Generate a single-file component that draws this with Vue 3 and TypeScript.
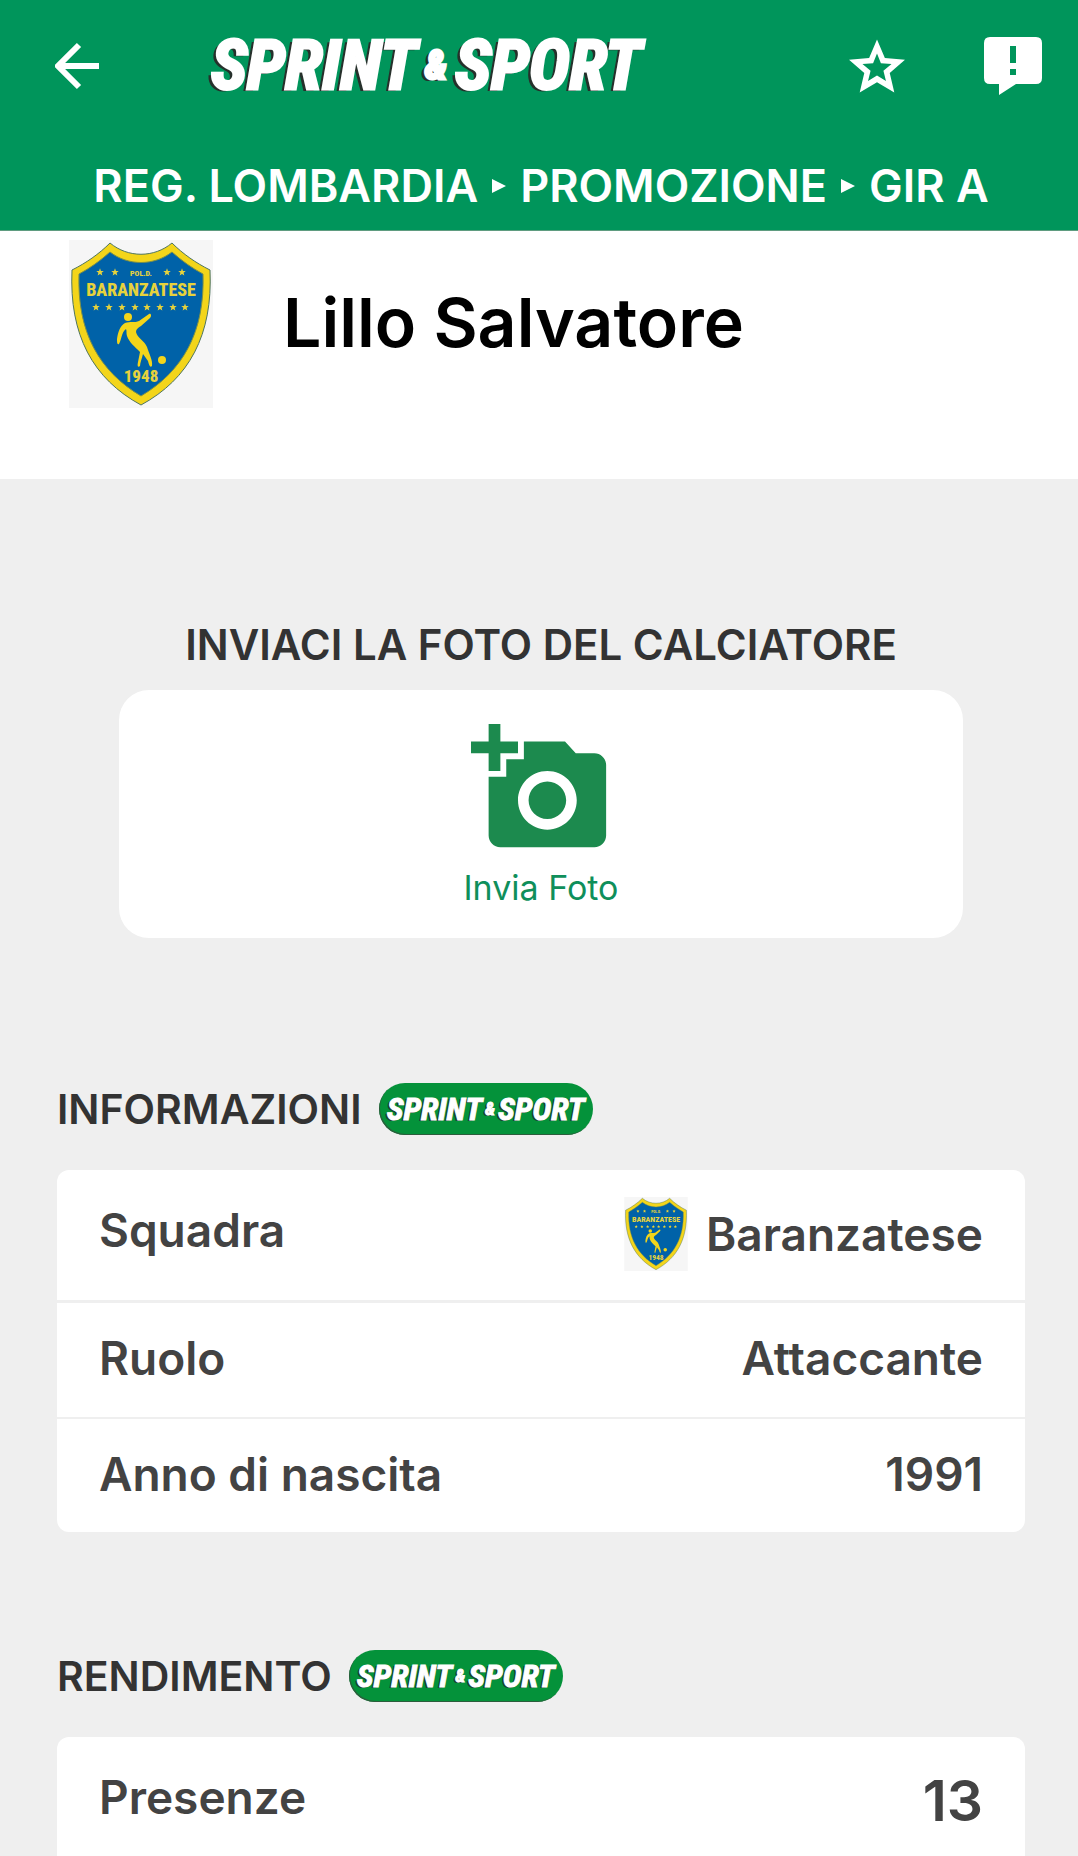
<script setup lang="ts">
interface InfoRow {
  label: string
  value: string
  crest?: boolean
  large?: boolean
}

interface InfoSection {
  title: string
  rows: InfoRow[]
}

const trail: string[] = ['REG. LOMBARDIA', 'PROMOZIONE', 'GIR A']

const sections: InfoSection[] = [
  {
    title: 'INFORMAZIONI',
    rows: [
      { label: 'Squadra', value: 'Baranzatese', crest: true },
      { label: 'Ruolo', value: 'Attaccante' },
      { label: 'Anno di nascita', value: '1991' },
    ],
  },
  {
    title: 'RENDIMENTO',
    rows: [{ label: 'Presenze', value: '13', large: true }],
  },
]

const upperStars: number[] = [31, 46, 98, 113]
const lowerStars: number[] = [27, 40, 53, 66, 78, 91, 104, 116]
</script>

<template>
  <div class="page">
    <header class="top">
      <div class="bar">
        <button class="icon-btn back" type="button" aria-label="Indietro">
          <svg viewBox="0 0 44 48" width="44" height="48">
            <path d="M44 24H5M24 3 3 24 24 45" fill="none" stroke="#fff" stroke-width="6" />
          </svg>
        </button>
        <div class="wordmark">SPRINT<span class="amp">&amp;</span>SPORT</div>
        <button class="icon-btn star" type="button" aria-label="Preferiti">
          <svg viewBox="2 2 20 19" width="56" height="54">
            <path fill="#fff" d="M22 9.24l-7.19-.62L12 2 9.19 8.63 2 9.24l5.46 4.73L5.82 21 12 17.27 18.18 21l-1.63-7.03L22 9.24zM12 14.9l-3.2 2 .9-3.7-2.9-2.4 3.8-.3L12 7l1.4 3.5 3.8.3-2.9 2.4.9 3.7L12 14.9z" />
          </svg>
        </button>
        <button class="icon-btn" type="button" aria-label="Segnala">
          <svg viewBox="0 0 58 58" width="58" height="58">
            <path fill="#fff" fill-rule="evenodd" d="M6 0H52Q58 0 58 6V41Q58 47 52 47H32L15 58V47H6Q0 47 0 41V6Q0 0 6 0ZM26 9V26H32V9ZM26 32V38H32V32Z" />
          </svg>
        </button>
      </div>
      <nav class="trail">
        <template v-for="(item, i) in trail" :key="item">
          <svg v-if="i > 0" class="sep" viewBox="0 0 14 14" width="14" height="14" aria-hidden="true">
            <path d="M0 0 14 7 0 14Z" fill="#fff" />
          </svg>
          <span>{{ item }}</span>
        </template>
      </nav>
    </header>

    <section class="player">
      <svg class="crest-large" viewBox="0 0 144 168">
        <symbol id="crest-star" viewBox="0 0 10 10">
          <path fill="#e6d23c" d="M5 0.4 6.2 3.6 9.7 3.8 7 6 7.9 9.4 5 7.5 2.1 9.4 3 6 0.3 3.8 3.8 3.6Z" />
        </symbol>
        <g id="crest">
          <rect width="144" height="168" fill="#f6f6f6" />
          <path
            d="M41 3C59 18 85 18 103 3C114 14 127 23 141 30C144 95 120 139 72 165C24 139 0 95 3 30C17 23 30 14 41 3Z"
            fill="#f3d51a" stroke="#4f7560" stroke-width="1"
          />
          <path
            d="M41 12C59 26 85 26 103 12C113 21 123 28 134 34C136 92 114 131 72 156C30 131 8 92 10 34C21 28 31 21 41 12Z"
            fill="#0062a8" stroke="#7b8f4a" stroke-width="1"
          />
          <use v-for="x in upperStars" :key="`u${x}`" href="#crest-star" :x="x - 4" y="28" width="8" height="8" />
          <use v-for="x in lowerStars" :key="`l${x}`" href="#crest-star" :x="x - 4" y="63" width="8" height="8" />
          <g fill="#e6d23c" font-family="'Roboto Condensed', Roboto, sans-serif" font-weight="800" text-anchor="middle">
            <text x="72" y="36" font-size="8">POL.D.</text>
            <text x="72" y="56" font-size="18">BARANZATESE</text>
            <text x="72" y="142" font-size="17">1948</text>
          </g>
          <g fill="#f3d51a">
            <circle cx="59" cy="77" r="4" />
            <circle cx="93" cy="120" r="4" />
            <path d="M56 83C61 81 66 83 70 81L80 74C82 73 83 76 81 78L72 86C69 88 67 89 67 92C68 98 76 101 78 107C80 114 84 120 83 126C81 128 80 125 79 121L74 114C73 118 71 123 71 126C69 128 68 126 69 122L71 112C66 107 60 102 58 96C57 93 58 91 57 89C52 93 53 99 50 104C48 105 48 102 48 99C49 92 51 86 56 83Z" />
          </g>
        </g>
      </svg>
      <h1>Lillo Salvatore</h1>
    </section>

    <main class="content">
      <section class="photo">
        <h2>INVIACI LA FOTO DEL CALCIATORE</h2>
        <button class="photo-card" type="button">
          <svg viewBox="0 0 24 24" width="141" height="141" aria-hidden="true">
            <path fill="#1c8a4e" d="M3 4V1h2v3h3v2H5v3H3V6H0V4zM6 10V7h3V4h7l1.83 2H21c1.1 0 2 .9 2 2v12c0 1.1-.9 2-2 2H5c-1.1 0-2-.9-2-2V10zm7 9c2.76 0 5-2.24 5-5s-2.24-5-5-5-5 2.24-5 5 2.24 5 5 5zm-3.2-5c0 1.77 1.43 3.2 3.2 3.2s3.2-1.43 3.2-3.2-1.43-3.2-3.2-3.2-3.2 1.43-3.2 3.2z" />
          </svg>
          <span>Invia Foto</span>
        </button>
      </section>

      <section v-for="section in sections" :key="section.title" class="block">
        <div class="block-head">
          <h2>{{ section.title }}</h2>
          <div class="pill"><div class="wordmark small">SPRINT<span class="amp">&amp;</span>SPORT</div></div>
        </div>
        <table>
          <tbody>
            <tr v-for="row in section.rows" :key="row.label" :class="{ tall: row.crest || row.large }">
              <th scope="row">{{ row.label }}</th>
              <td>
                <div class="value" :class="{ large: row.large }">
                  <svg v-if="row.crest" class="crest-small" viewBox="0 0 144 168"><use href="#crest" /></svg>
                  <span>{{ row.value }}</span>
                </div>
              </td>
            </tr>
          </tbody>
        </table>
      </section>
    </main>
  </div>
</template>

<style>
body {
  margin: 0;
  background: #efefef;
}
</style>

<style scoped>
.page {
  height: 100vh;
  overflow: hidden;
  background: #efefef;
  color: #434343;
  font-family: Inter, Roboto, sans-serif;
  font-weight: 600;
}

h1,
h2 {
  margin: 0;
  font-weight: 600;
}

button {
  padding: 0;
  border: 0;
  background: none;
  font: inherit;
  cursor: pointer;
}

.top {
  box-sizing: border-box;
  height: 231px;
  border-bottom: 1px solid #5f9c80;
  background: #00955b;
  color: #fff;
}

.bar {
  display: flex;
  align-items: center;
  height: 132px;
  padding: 0 36px 0 55px;
}

.icon-btn {
  display: flex;
}

.back {
  margin-right: 112px;
}

.star {
  margin: 0 79px 0 auto;
}

.wordmark {
  display: flex;
  align-items: center;
  gap: 8px;
  color: #fff;
  font: italic 700 69px/80px 'Roboto Condensed', Roboto, sans-serif;
  -webkit-text-stroke: 3px #fff;
  text-shadow: -4px 2px 0 #26302b;
}

.amp {
  font-size: 40px;
}

.wordmark.small {
  gap: 3px;
  font-size: 32px;
  line-height: 40px;
  -webkit-text-stroke-width: 1px;
  text-shadow: -2px 1px 0 #22402c;
}

.small .amp {
  font-size: 18px;
}

.trail {
  display: flex;
  align-items: center;
  justify-content: center;
  gap: 14px;
  padding-left: 4px;
  font-size: 45px;
  line-height: 108px;
  height: 108px;
  white-space: nowrap;
}

.player {
  display: flex;
  align-items: flex-start;
  gap: 70px;
  height: 239px;
  padding: 9px 69px 0;
  background: #fff;
  color: #000;
}

.crest-large {
  width: 144px;
  height: 168px;
}

.player h1 {
  font-size: 68px;
  line-height: 164px;
}

.content {
  padding: 136px 53px 0 57px;
}

h2 {
  color: #333;
  font-size: 41px;
  line-height: 60px;
}

.photo {
  padding: 0 62px;
  text-align: center;
}

.photo h2 {
  font-size: 42px;
}

.photo-card {
  display: flex;
  flex-direction: column;
  align-items: center;
  width: 100%;
  height: 248px;
  margin-top: 15px;
  padding-top: 28px;
  border-radius: 30px;
  background: #fff;
  color: #0f8f5b;
  font-size: 34px;
  font-weight: 400;
  line-height: 58px;
}

.block {
  padding-top: 141px;
}

.block + .block {
  padding-top: 114px;
}

.block-head {
  display: flex;
  align-items: center;
  gap: 17px;
  height: 60px;
}

.pill {
  display: flex;
  align-items: center;
  justify-content: center;
  width: 214px;
  height: 52px;
  border-radius: 26px;
  background: #04923a;
  box-shadow: inset 1px -1px 0 #2c5c3c;
}

table {
  width: 100%;
  margin-top: 31px;
  overflow: hidden;
  border-spacing: 0;
  border-radius: 12px;
  background: #fff;
  font-size: 46px;
  line-height: 54px;
}

tr {
  height: 115px;
}

tr.tall {
  height: 130px;
}

tr.tall + tr {
  height: 117px;
}

th,
td {
  padding: 0 42px 4px;
  font-weight: 600;
}

th {
  text-align: left;
}

.tall th {
  padding-bottom: 10px;
}

.tall td {
  padding-bottom: 2px;
}

tr + tr > * {
  border-top: 2px solid #efefef;
}

tr.tall + tr > * {
  border-top-width: 3px;
}

.value {
  display: flex;
  align-items: center;
  justify-content: flex-end;
  gap: 18px;
}

.value.large {
  font-size: 57px;
}

.crest-small {
  width: 64px;
  height: 74px;
}
</style>
